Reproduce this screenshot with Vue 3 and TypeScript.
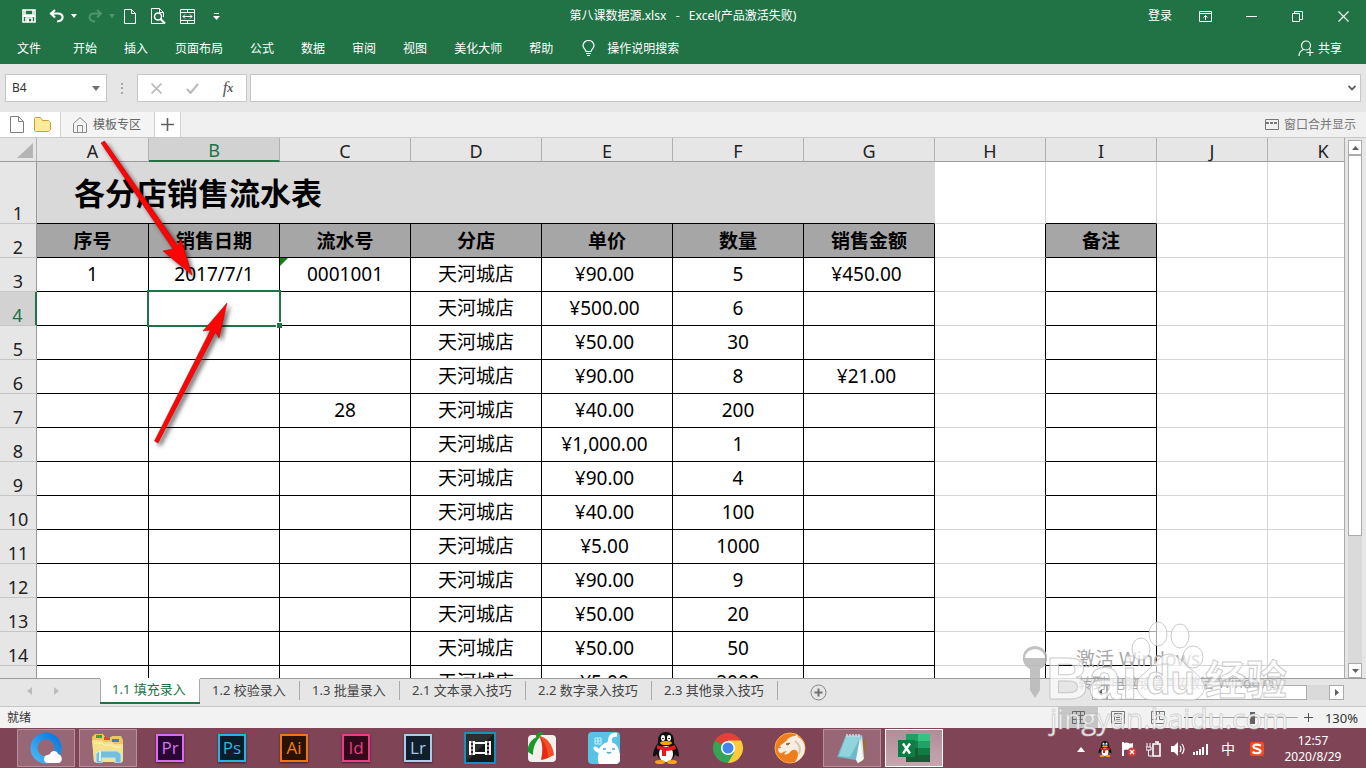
<script setup lang="ts">
import { ref } from 'vue'

interface Row {
  n: number
  cells: string[]
}

const menus = ['文件', '开始', '插入', '页面布局', '公式', '数据', '审阅', '视图', '美化大师', '帮助']
const columns = ['A', 'B', 'C', 'D', 'E', 'F', 'G', 'H', 'I', 'J', 'K']
const headings = ['序号', '销售日期', '流水号', '分店', '单价', '数量', '销售金额']
const shop = '天河城店'

const rows: Row[] = [
  { n: 3, cells: ['1', '2017/7/1', '0001001', shop, '¥90.00', '5', '¥450.00'] },
  { n: 4, cells: ['', '', '', shop, '¥500.00', '6', ''] },
  { n: 5, cells: ['', '', '', shop, '¥50.00', '30', ''] },
  { n: 6, cells: ['', '', '', shop, '¥90.00', '8', '¥21.00'] },
  { n: 7, cells: ['', '', '28', shop, '¥40.00', '200', ''] },
  { n: 8, cells: ['', '', '', shop, '¥1,000.00', '1', ''] },
  { n: 9, cells: ['', '', '', shop, '¥90.00', '4', ''] },
  { n: 10, cells: ['', '', '', shop, '¥40.00', '100', ''] },
  { n: 11, cells: ['', '', '', shop, '¥5.00', '1000', ''] },
  { n: 12, cells: ['', '', '', shop, '¥90.00', '9', ''] },
  { n: 13, cells: ['', '', '', shop, '¥50.00', '20', ''] },
  { n: 14, cells: ['', '', '', shop, '¥50.00', '50', ''] },
  { n: 15, cells: ['', '', '', shop, '¥5.00', '2000', ''] },
]

const sheets = ['1.1 填充录入', '1.2 校验录入', '1.3 批量录入', '2.1 文本录入技巧', '2.2 数字录入技巧', '2.3 其他录入技巧']
const activeSheet = ref(0)
const cellName = ref('B4')
const formula = ref('')
const zoom = ref(130)

const apps = [
  { id: 'browser', state: 'open' },
  { id: 'folder', state: 'open' },
  { id: 'Pr', state: '' },
  { id: 'Ps', state: '' },
  { id: 'Ai', state: '' },
  { id: 'Id', state: '' },
  { id: 'Lr', state: '' },
  { id: 'film', state: '' },
  { id: 'capture', state: '' },
  { id: 'pet', state: '' },
  { id: 'qq', state: '' },
  { id: 'chrome', state: '' },
  { id: 'cheetah', state: '' },
  { id: 'notepad', state: 'open' },
  { id: 'excel', state: 'current' },
]
const adobe = ['Pr', 'Ps', 'Ai', 'Id', 'Lr']
</script>

<template>
  <div class="app">
    <header class="ribbon">
      <div class="title-row">
        <div class="quick">
          <button class="q-save" aria-label="保存">
            <svg width="14" height="14" viewBox="0 0 14 14"><path d="M1 1h12v12H1z M3 1v5h8V1 M4 13V9h6v4" fill="none" stroke="#fff" stroke-width="1.6" /><path d="M5 10h2v3H5z M1 6h12v2H1z" fill="#fff" /></svg>
          </button>
          <button class="q-undo" aria-label="撤消">
            <svg width="16" height="14" viewBox="0 0 16 14"><path d="M6 1 2 4.500 6 8.500 M2.500 4.500H9c6 0 6.500 7.500-1 8" fill="none" stroke="#fff" stroke-width="2.200" /></svg>
          </button>
          <button class="q-drop" aria-label="撤消列表"><svg width="6" height="4" viewBox="0 0 6 4"><path d="M0 0h6L3 4z" fill="#fff" /></svg></button>
          <button class="q-undo redo" aria-label="恢复">
            <svg width="16" height="14" viewBox="0 0 16 14"><path d="M10 1l4 3.500-4 4 M13.500 4.500H7c-6 0-6.500 7.500 1 8" fill="none" stroke="#4f9470" stroke-width="2" /></svg>
          </button>
          <button class="q-drop" aria-label="恢复列表"><svg width="6" height="4" viewBox="0 0 6 4"><path d="M0 0h6L3 4z" fill="#4f9470" /></svg></button>
          <button class="q-btn" aria-label="新建">
            <svg width="12" height="15" viewBox="0 0 12 15"><path d="M.5.5h7l4 4v10H.5z M7.500.5v4h4" fill="none" stroke="#fff" /></svg>
          </button>
          <button class="q-btn" aria-label="打印预览">
            <svg width="15" height="17" viewBox="0 0 15 17"><path d="M12.500 15.500H.5V.5h8l4 4V9 M8.500.5v4h4" fill="none" stroke="#fff" /><circle cx="7" cy="8.500" r="3.500" fill="none" stroke="#fff" stroke-width="1.500" /><path d="M9.500 11l4.500 4.500" stroke="#fff" stroke-width="2.200" /></svg>
          </button>
          <button class="q-btn" aria-label="合并">
            <svg width="15" height="15" viewBox="0 0 15 15"><path d="M.5.5h14v14H.5z M.5 3.500h14 M.5 11.500h14 M7.500.5v3 M7.500 11.500v3 M3 7.500h9 M5 5.500l-2 2 2 2 M10 5.500l2 2-2 2" fill="none" stroke="#fff" /></svg>
          </button>
          <button class="q-btn" aria-label="自定义快速访问工具栏">
            <svg width="7" height="7" viewBox="0 0 7 7"><path d="M1 0h5v1H1z M0 3h7L3.500 7z" fill="#fff" /></svg>
          </button>
        </div>
        <div class="doc-title">第八课数据源.xlsx&nbsp;&nbsp; -&nbsp;&nbsp; Excel(产品激活失败)</div>
        <div class="window-tools">
          <button class="login">登录</button>
          <button class="win" aria-label="功能区显示选项"><svg width="13" height="11" viewBox="0 0 13 11"><path d="M.5.5h12v10H.5z M.5 2.500h12 M6.500 9V4.500 M4.500 6.500l2-2 2 2" fill="none" stroke="#fff" /></svg></button>
          <button class="win" aria-label="最小化"><svg width="11" height="11" viewBox="0 0 11 11"><path d="M0 5.500h11" stroke="#fff" /></svg></button>
          <button class="win" aria-label="还原"><svg width="11" height="11" viewBox="0 0 11 11"><path d="M.5 2.500h7v8h-7z M2.500 2.500v-2h8v8h-3" fill="none" stroke="#fff" /></svg></button>
          <button class="win" aria-label="关闭"><svg width="11" height="11" viewBox="0 0 11 11"><path d="M.5.5l10 10 M10.500.5l-10 10" stroke="#fff" stroke-width="1.200" /></svg></button>
        </div>
      </div>
      <nav class="menu-row">
        <button v-for="m in menus" :key="m" class="menu">{{ m }}</button>
        <button class="menu tell">
          <svg width="13" height="17" viewBox="0 0 13 17"><path d="M4 11.500C4 9.500 1 8.500 1 5.500a5.500 5 0 0 1 11 0c0 3-3 4-3 6z M4 13.500h5 M5 15.500h3" fill="none" stroke="#fff" stroke-width="1.200" /></svg>
          <span>操作说明搜索</span>
        </button>
        <button class="menu share">
          <svg width="16" height="17" viewBox="0 0 16 17"><circle cx="8" cy="5.500" r="4.500" fill="none" stroke="#fff" stroke-width="1.200" /><path d="M1 16c0-4 2-5.500 4.500-6.500 M12 9v7 M8.500 12.500h7" fill="none" stroke="#fff" stroke-width="1.200" /></svg>
          <span>共享</span>
        </button>
      </nav>
    </header>

    <section class="formula-row">
      <div class="name-box">
        <input v-model="cellName" aria-label="名称框" />
        <button aria-label="名称列表"><svg width="8" height="5" viewBox="0 0 8 5"><path d="M0 0h8L4 5z" fill="#707070" /></svg></button>
      </div>
      <svg class="grip" width="2" height="11" viewBox="0 0 2 11"><path d="M0 0h2v2H0z M0 4h2v2H0z M0 9h2v2H0z" fill="#a6a6a6" /></svg>
      <div class="fx-box">
        <button aria-label="取消"><svg width="11" height="11" viewBox="0 0 11 11"><path d="M.5.5l10 10 M10.500.5l-10 10" stroke="#bcbcbc" stroke-width="1.800" /></svg></button>
        <button aria-label="输入"><svg width="13" height="11" viewBox="0 0 13 11"><path d="M1 6l3.500 4L12 1" fill="none" stroke="#bcbcbc" stroke-width="2.200" /></svg></button>
        <button class="fx" aria-label="插入函数"><i>f</i><sub>x</sub></button>
      </div>
      <div class="formula-box">
        <input v-model="formula" aria-label="编辑栏" />
        <button aria-label="展开编辑栏"><svg width="8" height="6" viewBox="0 0 8 6"><path d="M.5 1L4 4.500 7.500 1" fill="none" stroke="#606060" stroke-width="1.800" /></svg></button>
      </div>
    </section>

    <section class="template-row">
      <div class="file-tools">
        <button aria-label="新建文件"><svg width="14" height="17" viewBox="0 0 14 17"><path d="M.5.5h8l5 5v11H.5z M8.500.5v5h5" fill="#fff" stroke="#808080" /></svg></button>
        <button aria-label="打开文件夹"><svg width="17" height="15" viewBox="0 0 17 15"><path d="M1.500.5h5l2 3h6l2 2v7l-2 2H1.500l-1-1v-12z" fill="#fdeb9c" stroke="#c99f3c" /></svg></button>
      </div>
      <button class="template-tab">
        <svg width="14" height="16" viewBox="0 0 14 16"><path d="M.5 6.500l6.500-6 6.500 6v9H.5z M4.500 15.500v-7h5v7" fill="none" stroke="#8a8a8a" /></svg>
        <span>模板专区</span>
      </button>
      <button class="add-tab" aria-label="新建标签"><svg width="13" height="13" viewBox="0 0 13 13"><path d="M6.500 0v13 M0 6.500h13" stroke="#606060" stroke-width="1.600" /></svg></button>
      <button class="merge-view">
        <svg width="14" height="11" viewBox="0 0 14 11"><path d="M.5.5h13v10H.5z" fill="none" stroke="#777" /><path d="M1 4h12" stroke="#777" stroke-width="2" stroke-dasharray="3 1" /></svg>
        <span>窗口合并显示</span>
      </button>
    </section>

    <main class="workspace">
      <div class="grid-view">
        <table>
          <colgroup>
            <col class="c-num" /><col class="c-a" />
            <col v-for="i in 6" :key="i" class="c-wide" />
            <col v-for="i in 4" :key="'s' + i" class="c-side" />
          </colgroup>
          <thead>
            <tr>
              <th class="corner"><svg width="16" height="15" viewBox="0 0 16 15"><path d="M16 0v15H0z" fill="#b4b4b4" /></svg></th>
              <th v-for="c in columns" :key="c" scope="col" :class="{ picked: c === 'B' }">{{ c }}</th>
            </tr>
          </thead>
          <tbody>
            <tr class="first">
              <th scope="row">1</th>
              <td colspan="7" class="sheet-title">各分店销售流水表</td>
              <td></td><td class="over-note"></td><td></td><td></td>
            </tr>
            <tr>
              <th scope="row">2</th>
              <td v-for="h in headings" :key="h" class="data head">{{ h }}</td>
              <td class="pre-note"></td><td class="data head">备注</td><td></td><td></td>
            </tr>
            <tr v-for="r in rows" :key="r.n" :class="{ current: r.n === 4 }">
              <th scope="row">{{ r.n }}</th>
              <td v-for="(v, i) in r.cells" :key="i" class="data" :class="{ money: i === 4 || i === 6 }">
                {{ v }}
                <span v-if="r.n === 4 && i === 1" class="selection"></span>
                <span v-if="r.n === 3 && i === 2" class="text-flag"></span>
              </td>
              <td class="pre-note"></td><td class="data"></td><td></td><td></td>
            </tr>
          </tbody>
        </table>
        <svg class="arrows" width="260" height="330" viewBox="0 0 260 330">
          <g fill="#fb0505" stroke="#d00000" stroke-width=".6" stroke-linejoin="round">
            <path d="M101 5L104.500 3 178 108 181 101 192 137 163 113 173 111z" />
            <path d="M154.500 303L210.500 192 203 193 227 165 219 200 215.500 194 158 305z" />
          </g>
        </svg>
      </div>
      <div class="v-scroll">
        <button aria-label="向上滚动"><svg width="7" height="4" viewBox="0 0 7 4"><path d="M0 4h7L3.500 0z" fill="#606060" /></svg></button>
        <div class="v-track"><div class="v-thumb"></div></div>
        <button aria-label="向下滚动"><svg width="7" height="4" viewBox="0 0 7 4"><path d="M0 0h7L3.500 4z" fill="#606060" /></svg></button>
      </div>
    </main>

    <section class="sheet-row">
      <div class="sheet-nav">
        <button aria-label="上一张"><svg width="5" height="8" viewBox="0 0 5 8"><path d="M5 0v8L0 4z" fill="#bcbcbc" /></svg></button>
        <button aria-label="下一张"><svg width="5" height="8" viewBox="0 0 5 8"><path d="M0 0v8l5-4z" fill="#bcbcbc" /></svg></button>
      </div>
      <button v-for="(s, i) in sheets" :key="s" class="sheet-tab" :class="{ active: i === activeSheet, long: s.length > 8 }" @click="activeSheet = i"><span>{{ s }}</span></button>
      <button class="add-sheet" aria-label="新工作表"><svg width="17" height="17" viewBox="0 0 17 17"><circle cx="8.500" cy="8.500" r="7.500" fill="none" stroke="#858585" /><path d="M8.500 4.500v8 M4.500 8.500h8" stroke="#707070" stroke-width="2" /></svg></button>
      <div class="h-scroll">
        <button aria-label="向左滚动"><svg width="4" height="7" viewBox="0 0 4 7"><path d="M4 0v7L0 3.500z" fill="#606060" /></svg></button>
        <div class="h-track"><div class="h-thumb"></div></div>
        <button aria-label="向右滚动"><svg width="4" height="7" viewBox="0 0 4 7"><path d="M0 0v7l4-3.500z" fill="#606060" /></svg></button>
      </div>
    </section>

    <footer class="status">
      <span class="ready">就绪</span>
      <button class="view on" aria-label="普通"><svg width="13" height="13" viewBox="0 0 13 13"><path d="M.5.5h12v12H.5z M4.500.5v12 M8.500.5v12 M.5 4.500h12 M.5 8.500h12" fill="none" stroke="#666" /></svg></button>
      <button class="view" aria-label="页面布局"><svg width="14" height="13" viewBox="0 0 14 13"><path d="M.5.5h13v12H.5z M3.500 2.500h7v8h-7z M5 4.500h4 M5 6.500h4 M5 8.500h4" fill="none" stroke="#777" /></svg></button>
      <button class="view" aria-label="分页预览"><svg width="14" height="13" viewBox="0 0 14 13"><path d="M.5.5h13v12H.5z M5.500.5v8 M8.500.5v8 M.5 8.500h5 M8.500 8.500h5" fill="none" stroke="#777" /></svg></button>
      <button class="step" aria-label="缩小"><svg width="9" height="9" viewBox="0 0 9 9"><path d="M0 4.500h9" stroke="#555" /></svg></button>
      <input v-model="zoom" class="zoom" type="range" min="10" max="230" aria-label="缩放" />
      <button class="step" aria-label="放大"><svg width="9" height="9" viewBox="0 0 9 9"><path d="M0 4.500h9 M4.500 0v9" stroke="#555" /></svg></button>
      <span class="percent">{{ zoom }}%</span>
    </footer>

    <footer class="taskbar">
      <div class="apps">
        <button v-for="a in apps" :key="a.id" class="task" :class="a.state" :aria-label="a.id">
          <span v-if="adobe.includes(a.id)" class="adobe" :class="a.id">{{ a.id }}</span>
          <svg v-else-if="a.id === 'browser'" width="32" height="32" viewBox="0 0 32 32">
            <defs><linearGradient id="blue" x1="0" y1="1" x2="1" y2="0"><stop offset="0" stop-color="#45b8f5" /><stop offset="1" stop-color="#0878df" /></linearGradient></defs>
            <circle cx="16" cy="16" r="12" fill="none" stroke="url(#blue)" stroke-width="7" />
            <path d="M18 31a4 4 0 0 1 0-8c1-1 2-1 2-1 1-4 7-4 8 0 5 1 5 9 0 9z" fill="#fff" />
          </svg>
          <svg v-else-if="a.id === 'folder'" width="34" height="30" viewBox="0 0 34 30">
            <path d="M1 4l3-3h8l2 3h6l1-1h9l2 4v22H3z" fill="#e8c95e" />
            <path d="M5 2h6v3H5z" fill="#36a342" /><path d="M13 4h6v3h-6z" fill="#e14834" /><path d="M21 6h7v3h-7z" fill="#397fd1" />
            <path d="M1 7h10l2 2h8l2 2h9v16l-3 2H3z" fill="#f5e08c" /><path d="M3 10h8l2 2h8l2 2h7" fill="none" stroke="#fff3b8" />
            <path d="M5 30V21l3-3h18l4 3v9h-6v-5H11v5z" fill="#75bddd" stroke="#b9eafa" /><path d="M9 18v10" stroke="#d9f7ff" stroke-width="2" />
          </svg>
          <svg v-else-if="a.id === 'film'" width="32" height="32" viewBox="0 0 32 32">
            <path d="M1 1h30v30H1z" fill="#2c2f32" stroke="#1690bd" stroke-width="2" /><path d="M2 30L30 2v28z" fill="#17191b" />
            <path d="M6 9v14 M10 9v14 M22 9v14 M26 9v14 M10 11h12 M10 21h12" stroke="#fff" stroke-width="2" /><path d="M6 10h4 M6 14h4 M6 18h4 M6 22h4 M22 10h4 M22 14h4 M22 18h4 M22 22h4" stroke="#fff" />
          </svg>
          <svg v-else-if="a.id === 'capture'" width="32" height="32" viewBox="0 0 32 32">
            <rect x="2" y="3" width="28" height="27" rx="4" fill="#f1f0ed" />
            <path d="M13 4C5 7 1 13 2 20l5 3c0-7 2-13 7-18z" fill="#169b2b" />
            <path d="M13 4c8 2 13 9 14 19-3 1-5 4-12 5 2-9 2-17-2-24z" fill="#e92913" /><path d="M13 4c8 1 14 9 15 19l-6 3c0-9-3-16-9-22z" fill="#f0502c" /><path d="M10 4c3-1 5-2 6-4" stroke="#169b2b" stroke-width="3" />
          </svg>
          <svg v-else-if="a.id === 'pet'" width="32" height="32" viewBox="0 0 32 32">
            <rect width="32" height="32" rx="4" fill="#59c3e4" />
            <path d="M11 32c-2-5-1-9 0-11-4-1-7-5-5-6 1-1 3 0 5 2 3-6 8-7 10-7 7 0 10 6 10 10l1 2v7l-3 3z" fill="#fff" />
            <path d="M22 11c-1-7 3-9 7-8" stroke="#fff" stroke-width="4" fill="none" /><path d="M15 17h3 M24 17h3 M19 20q2 2 4 0" stroke="#4fa9c5" stroke-width="1.500" fill="none" /><path d="M7 6h6v6H7z M7 9h6 M10 6v6" stroke="#c9f3ff" fill="none" />
          </svg>
          <svg v-else-if="a.id === 'qq'" width="32" height="32" viewBox="0 0 32 32"><use href="#penguin" /></svg>
          <svg v-else-if="a.id === 'chrome'" width="32" height="32" viewBox="0 0 32 32">
            <path d="M16 16L3 8.500A15 15 0 0 1 29 8.500z" fill="#e34133" /><path d="M16 16V31A15 15 0 0 0 29 8.500H16z" fill="#fdcb3c" /><path d="M16 16l-13-7.500A15 15 0 0 0 16 31l6.500-11z" fill="#35a455" />
            <circle cx="16" cy="16" r="7" fill="#fff" /><circle cx="16" cy="16" r="5.500" fill="#4285ee" />
          </svg>
          <svg v-else-if="a.id === 'cheetah'" width="32" height="32" viewBox="0 0 32 32">
            <circle cx="16" cy="16" r="15" fill="#ee7d1c" stroke="#ffb04c" />
            <path d="M4 18c1-5 5-6 8-9 3-4 6-5 9-5l2-2 1 3c6 3 8 10 6 16-2 5-6 8-9 9 3-4 4-8 2-11-2-2-4-1-6 0-2 3-5 4-7 3l3-3-4 1c-1 2-4 2-5-2z" fill="#f6ede3" />
            <path d="M12 12l4-1-2 2z M5 16l2-1" fill="#7c3c18" stroke="#a66133" /><path d="M21 9q7 5 4 13" fill="none" stroke="#d9c6b5" stroke-width="2" />
          </svg>
          <svg v-else-if="a.id === 'notepad'" width="34" height="32" viewBox="0 0 34 32">
            <path d="M25 5l6 4-2 20-6 2z" fill="#9c6d39" /><path d="M11 3h16l2 24-6 4z" fill="#d9e8ed" /><path d="M11 3h16l-6 25L2 25z" fill="#6fb9c9" /><path d="M11 4h15L15 25 4 24z" fill="#91d4dd" /><path d="M12 2v3 M15 2v3 M18 2v3 M21 2v3 M24 2v3" stroke="#d9d9d9" stroke-width="1.500" /><path d="M21 28l4-23 3 23-5 3z" fill="#f3f7f5" />
          </svg>
          <svg v-else width="34" height="32" viewBox="0 0 34 32">
            <path d="M9 2h12v14H9z" fill="#209e65" /><path d="M21 2h12v7H21z" fill="#33c481" /><path d="M21 9h12v7H21z" fill="#21a366" /><path d="M9 9h12v7H9z" fill="#148052" /><path d="M9 16h24v14H9z" fill="#185c37" /><path d="M21 16h12v7H21z" fill="#107c41" /><path d="M1 8h17v17H1z" fill="#107c41" /><path d="M6 11.500l7 10 M13 11.500l-7 10" stroke="#fff" stroke-width="2.400" />
          </svg>
        </button>
      </div>
      <div class="tray">
        <button aria-label="显示隐藏的图标"><svg width="8" height="5" viewBox="0 0 8 5"><path d="M0 5h8L4 0z" fill="#fff" /></svg></button>
        <button aria-label="QQ"><svg width="16" height="16" viewBox="3 0 26 32"><use href="#penguin" /></svg></button>
        <button aria-label="操作中心"><svg width="16" height="16" viewBox="0 0 16 16"><path d="M2 1v14" stroke="#fff" stroke-width="2" /><path d="M3 2c4-2 5 2 9 0v7c-4 2-5-2-9 0z" fill="#fff" /><circle cx="11" cy="11" r="4.500" fill="#d73835" /><path d="M9 9l4 4 M13 9l-4 4" stroke="#fff" stroke-width="1.400" /></svg></button>
        <button aria-label="电源"><svg width="15" height="16" viewBox="0 0 15 16"><path d="M7 3h7v12H7z M9 1h3v2" fill="#80505f" stroke="#fff" stroke-width="1.600" /><path d="M1 2v4 M4 2v4 M0 6h5v3H0z M2.500 9v6h4" fill="none" stroke="#fff" /></svg></button>
        <button aria-label="音量"><svg width="15" height="16" viewBox="0 0 15 16"><path d="M1 5h3l4-4v14l-4-4H1z" fill="#fff" /><path d="M10 5q2 3 0 6 M12 3q4 5 0 10" fill="none" stroke="#fff" stroke-width="1.200" /></svg></button>
        <button aria-label="网络"><svg width="16" height="12" viewBox="0 0 16 12"><path d="M0 9h2v3H0z M3 8h2v4H3z M6 6h2v6H6z M9 4h2v8H9z M13 1h2v11h-2z" fill="#fff" /></svg></button>
        <button class="ime">中</button>
        <button class="sogou" aria-label="输入法"><svg width="16" height="16" viewBox="0 0 16 16"><rect x="1" y="1" width="14" height="14" rx="2" fill="#ef4c1f" /><path d="M12 4.500C7 2.500 4 4 4.500 6s7 1.500 7 4-5 3-8 1" fill="none" stroke="#fff" stroke-width="2.200" /></svg></button>
        <time class="clock"><span>12:57</span><span>2020/8/29</span></time>
      </div>
    </footer>

    <svg class="watermark" width="350" height="148" viewBox="0 0 350 148">
      <defs>
        <g id="penguin">
          <path d="M16 0C8 0 8 7 8 11c-4 5-5 10-5 13 1 1 3 0 4-2 1 9 17 9 18 0 1 2 3 3 4 2 0-4-1-8-5-13 0-4 0-11-8-11z" fill="#111" />
          <ellipse cx="16" cy="22" rx="7" ry="8" fill="#fff" /><ellipse cx="13" cy="6" rx="2" ry="3" fill="#fff" /><ellipse cx="19" cy="6" rx="2" ry="3" fill="#fff" /><path d="M13 6v1 M19 6v1" stroke="#111" stroke-width="1.500" />
          <ellipse cx="16" cy="11" rx="6" ry="2" fill="#f5a414" /><path d="M7 13q9 4 18 0l1 4q-5 2-10 2v5h-4v-6l-5-1z" fill="#e51b20" /><ellipse cx="10" cy="30" rx="5" ry="2" fill="#f5a414" /><ellipse cx="22" cy="30" rx="5" ry="2" fill="#f5a414" />
        </g>
      </defs>
      <g fill="#a9a9a9"><text class="activate" x="60" y="46">激活 Windows</text><text class="activate-sub" x="62" y="68">转到“电脑设置”以激活 Windows。</text></g>
      <path d="M19 26a12 12 0 0 1 5 23v21l-5 8-5-8V49a12 12 0 0 1 5-23z M9 38h20a10 9 0 0 0-20 0z" fill="#b6b6b6" fill-rule="evenodd" opacity=".85" />
      <g fill="#fff" fill-opacity=".65" stroke="#bdbdbd" stroke-opacity=".8">
        <ellipse cx="142" cy="14" rx="9" ry="12" /><ellipse cx="164" cy="16" rx="9" ry="12" /><ellipse cx="125" cy="29" rx="9" ry="11" /><ellipse cx="177" cy="37" rx="10" ry="11" />
        <path d="M153 34c8 0 13 8 19 13 15 11 20 19 14 27-5 8-12 6-18 6h-30c-16 1-22-16-12-25 12-8 17-21 27-21z" />
        <text class="brand" x="30" y="79">Bai</text>
        <text class="brand-cn" x="189" y="75">经验</text>
        <text class="brand-du" x="130" y="74">du</text>
      </g>
      <text class="site" x="34" y="109">jingyan.baidu.com</text>
    </svg>
  </div>
</template>

<style>
html,
body {
  margin: 0;
  overflow: hidden;
}
</style>

<style scoped>
.app {
  position: relative;
  display: flex;
  flex-direction: column;
  height: 100vh;
  overflow: hidden;
  background: #e6e6e6;
  color: #333;
  font: 12px/16px 'Noto Sans', 'Noto Sans CJK SC', sans-serif;
}
.app * { box-sizing: border-box; }
svg { display: block; flex: none; }
button, input {
  margin: 0;
  padding: 0;
  border: 0;
  border-radius: 0;
  background: none;
  color: inherit;
  font: inherit;
}
button { display: flex; align-items: center; justify-content: center; flex: none; white-space: nowrap; }
input { min-width: 0; outline: none; }

.ribbon { flex: none; background: #217346; color: #fff; }
.title-row { display: grid; grid-template-columns: 1fr auto 1fr; height: 32px; align-items: center; }
.quick { display: flex; padding-left: 14px; }
.quick button { height: 30px; }
.q-save { width: 30px; }
.q-undo { width: 26px; }
.q-drop { width: 7px; }
.redo { margin-left: 5px; }
.q-btn { width: 29px; }
.doc-title { white-space: nowrap; }
.window-tools { display: flex; justify-content: flex-end; }
.login { margin-right: 10px; }
.win { width: 46px; height: 30px; }
.menu-row { display: flex; align-items: center; height: 32px; padding: 1px 24px 0 3px; }
.menu { height: 31px; padding: 0 14px; }
.menu:not(:first-child) { padding: 0 13px 0 14px; }
.menu:first-child { padding-right: 18px; }
.menu.tell { gap: 12px; padding-left: 16px; }
.menu.share { gap: 4px; margin-left: auto; padding: 0; }

.formula-row { display: flex; flex: none; align-items: center; height: 48px; padding: 0 5px; }
.name-box, .fx-box, .formula-box { display: flex; height: 28px; border: 1px solid #c6c6c6; background: #fff; }
.name-box { width: 102px; }
.name-box input { flex: 1; padding-left: 6px; }
.name-box button { width: 20px; }
.grip { margin: 0 14px; }
.fx-box button { width: 36px; }
.fx { color: #555; font: 17px/20px 'Liberation Serif', serif; }
.fx sub { font: italic bold 12px/12px 'Liberation Serif', serif; }
.formula-box { flex: 1; margin-left: 3px; }
.formula-box input { flex: 1; padding-left: 6px; }
.formula-box button { width: 16px; }

.template-row { display: flex; flex: none; height: 26px; border-bottom: 1px solid #c8c8c8; background: #f0f0f0; color: #666; }
.file-tools { display: flex; align-items: center; gap: 10px; width: 61px; padding-left: 10px; border-right: 1px solid #d0d0d0; background: #fff; }
.template-tab { gap: 6px; width: 94px; padding-right: 1px; border-right: 1px solid #d0d0d0; background: #f4f4f4; }
.add-tab { width: 26px; border-right: 1px solid #d0d0d0; background: #fff; }
.merge-view { gap: 5px; margin-left: auto; padding-right: 10px; color: #777; }

.workspace { display: flex; flex: 1; min-height: 0; }
.grid-view { position: relative; flex: 1; min-width: 0; overflow: hidden; border-right: 1px solid #ababab; background: #fff; }
table { width: 1379px; table-layout: fixed; border-collapse: separate; border-spacing: 0; color: #000; font-size: 19px; line-height: 20px; }
.c-num { width: 37px; }
.c-a { width: 112px; }
.c-wide { width: 131px; }
.c-side { width: 111px; }
th { padding: 0; background: #e6e6e6; color: #222; font-weight: 400; }
thead th { height: 24px; padding-top: 2px; border-right: 1px solid #b1b1b1; border-bottom: 1px solid #9b9b9b; font-size: 18px; }
thead .corner svg { margin: 0 3px 0 auto; }
thead .picked { border-bottom: 2px solid #217346; background: #d2d2d2; color: #217346; }
tbody th { border-right: 1px solid #9b9b9b; border-bottom: 1px solid #c6c6c6; vertical-align: bottom; font-size: 18px; }
td { height: 34px; padding: 0; border-right: 1px solid #d4d4d4; border-bottom: 1px solid #d4d4d4; text-align: center; vertical-align: middle; white-space: nowrap; }
.first td { height: 62px; }
td.sheet-title { padding-left: 37px; border-right-color: #d9d9d9; border-bottom-color: #000; background: #d9d9d9; text-align: left; font-size: 31px; line-height: 40px; font-weight: 700; }
td.over-note { border-bottom-color: #000; }
td.pre-note { border-right-color: #000; }
td.data { position: relative; padding-bottom: 2px; border-right-color: #000; border-bottom-color: #000; }
td.head { padding-bottom: 0; background: #a6a6a6; font-weight: 700; }
td.money { padding-right: 5px; }
.current th { border-right: 2px solid #217346; background: #d2d2d2; color: #217346; }
.selection { position: absolute; inset: -2px; z-index: 1; border: 2px solid #217346; }
.selection::after { position: absolute; right: -3px; bottom: -3px; width: 5px; height: 5px; border-top: 1px solid #fff; border-left: 1px solid #fff; background: #217346; content: ''; }
.text-flag { position: absolute; top: 0; left: 0; border-top: 8px solid #128012; border-right: 8px solid transparent; }
.arrows { position: absolute; top: 0; left: 0; z-index: 2; filter: drop-shadow(3px 3px 2px rgba(0, 0, 0, 0.55)); pointer-events: none; }

.v-scroll { display: flex; flex-direction: column; width: 21px; padding: 2px 4px 0 3px; }
.v-scroll button { width: 14px; height: 15px; border: 1px solid #ababab; background: #fff; }
.v-track { flex: 1; background: #dadada; }
.v-thumb { height: 75%; border: 1px solid #ababab; background: #fff; }

.sheet-row { display: flex; flex: none; height: 28px; color: #444; font-size: 13px; }
.sheet-nav { display: flex; gap: 22px; width: 100px; padding: 0 0 3px 27px; border-top: 1px solid #9b9b9b; }
.sheet-tab { height: 26px; border-top: 1px solid #9b9b9b; padding: 2px 0 4px; }
.sheet-tab span { min-width: 100px; padding-left: 12px; border-right: 1px solid #ababab; line-height: 19px; text-align: left; }
.sheet-tab.long span { min-width: 126px; }
.sheet-tab.active { border-top-color: #fff; border-bottom: 2px solid #217346; background: #fff; box-shadow: inset 1px 0 #ababab, inset -1px 0 #ababab; color: #217346; }
.sheet-tab.active span { border-right-color: transparent; }
.add-sheet { flex: 1; justify-content: flex-start; padding-left: 32px; border-top: 1px solid #9b9b9b; }
.h-scroll { display: flex; align-items: center; width: 274px; padding-right: 22px; border-top: 1px solid #9b9b9b; }
.h-scroll button { width: 15px; height: 15px; border: 1px solid #ababab; background: #fff; }
.h-track { flex: 1; height: 15px; background: #dadada; }
.h-thumb { width: 90%; height: 15px; border: 1px solid #ababab; background: #fff; }

.status { display: flex; flex: none; align-items: center; height: 22px; padding-right: 8px; border-top: 1px solid #c6c6c6; background: #f2f2f2; color: #333; }
.ready { flex: 1; padding-left: 7px; }
.view { width: 40px; height: 21px; }
.view.on { background: #c6c6c6; }
.step { width: 20px; height: 21px; }
.zoom { width: 100px; height: 14px; appearance: none; background: linear-gradient(#a6a6a6, #a6a6a6) center / 100% 1px no-repeat; }
.zoom::-webkit-slider-thumb { width: 5px; height: 12px; appearance: none; background: #606060; }
.percent { width: 40px; text-align: right; font-size: 13px; }

.taskbar { display: flex; flex: none; justify-content: space-between; height: 40px; background: #7f4557; color: #fff; }
.apps { display: flex; gap: 4px; padding: 1px 0 1px 17px; }
.task { width: 58px; border: 1px solid transparent; }
.task.open { border-color: #b58f9b; background: #976776; }
.task.current { border-color: #fff; background: linear-gradient(#b18d98, #c5a7b0); }
.adobe { width: 28px; height: 28px; border: 2px solid; font: 17px/23px 'Open Sans', sans-serif; font-weight: 500; text-align: center; box-shadow: 0 1px 2px rgba(0, 0, 0, 0.5); }
.Pr { border-color: #d86bf0; background: #2a0634; color: #cf76e8; }
.Ps { border-color: #22b4e2; background: #071d29; color: #2ab7e5; }
.Ai { border-color: #ef7414; background: #2b1205; color: #ed841e; }
.Id { border-color: #ee3b86; background: #32081b; color: #e93d83; }
.Lr { border-color: #adcaea; background: #111f2c; color: #a8c8e4; }
.tray { display: flex; align-items: center; padding: 2px 23px 0 0; }
.tray button { width: 24px; height: 32px; }
.tray .ime { width: 30px; font-size: 14px; }
.tray .sogou { width: 28px; }
.tray .clock { display: flex; flex-direction: column; width: 72px; padding-left: 12px; align-items: center; }

.watermark { position: absolute; right: 0; bottom: 0; z-index: 5; pointer-events: none; }
.activate { font-size: 19px; }
.activate-sub { font-size: 14px; }
.brand { font: bold 59px 'Liberation Sans', sans-serif; }
.brand-cn { font: bold 41px 'Noto Sans CJK SC', sans-serif; }
.brand-du { font: bold 40px 'Liberation Sans', sans-serif; }
.site { fill: #fff; fill-opacity: 0.9; stroke: #b5b5b5; stroke-opacity: 0.6; font: 28px 'Open Sans', sans-serif; font-weight: 500; }
</style>
